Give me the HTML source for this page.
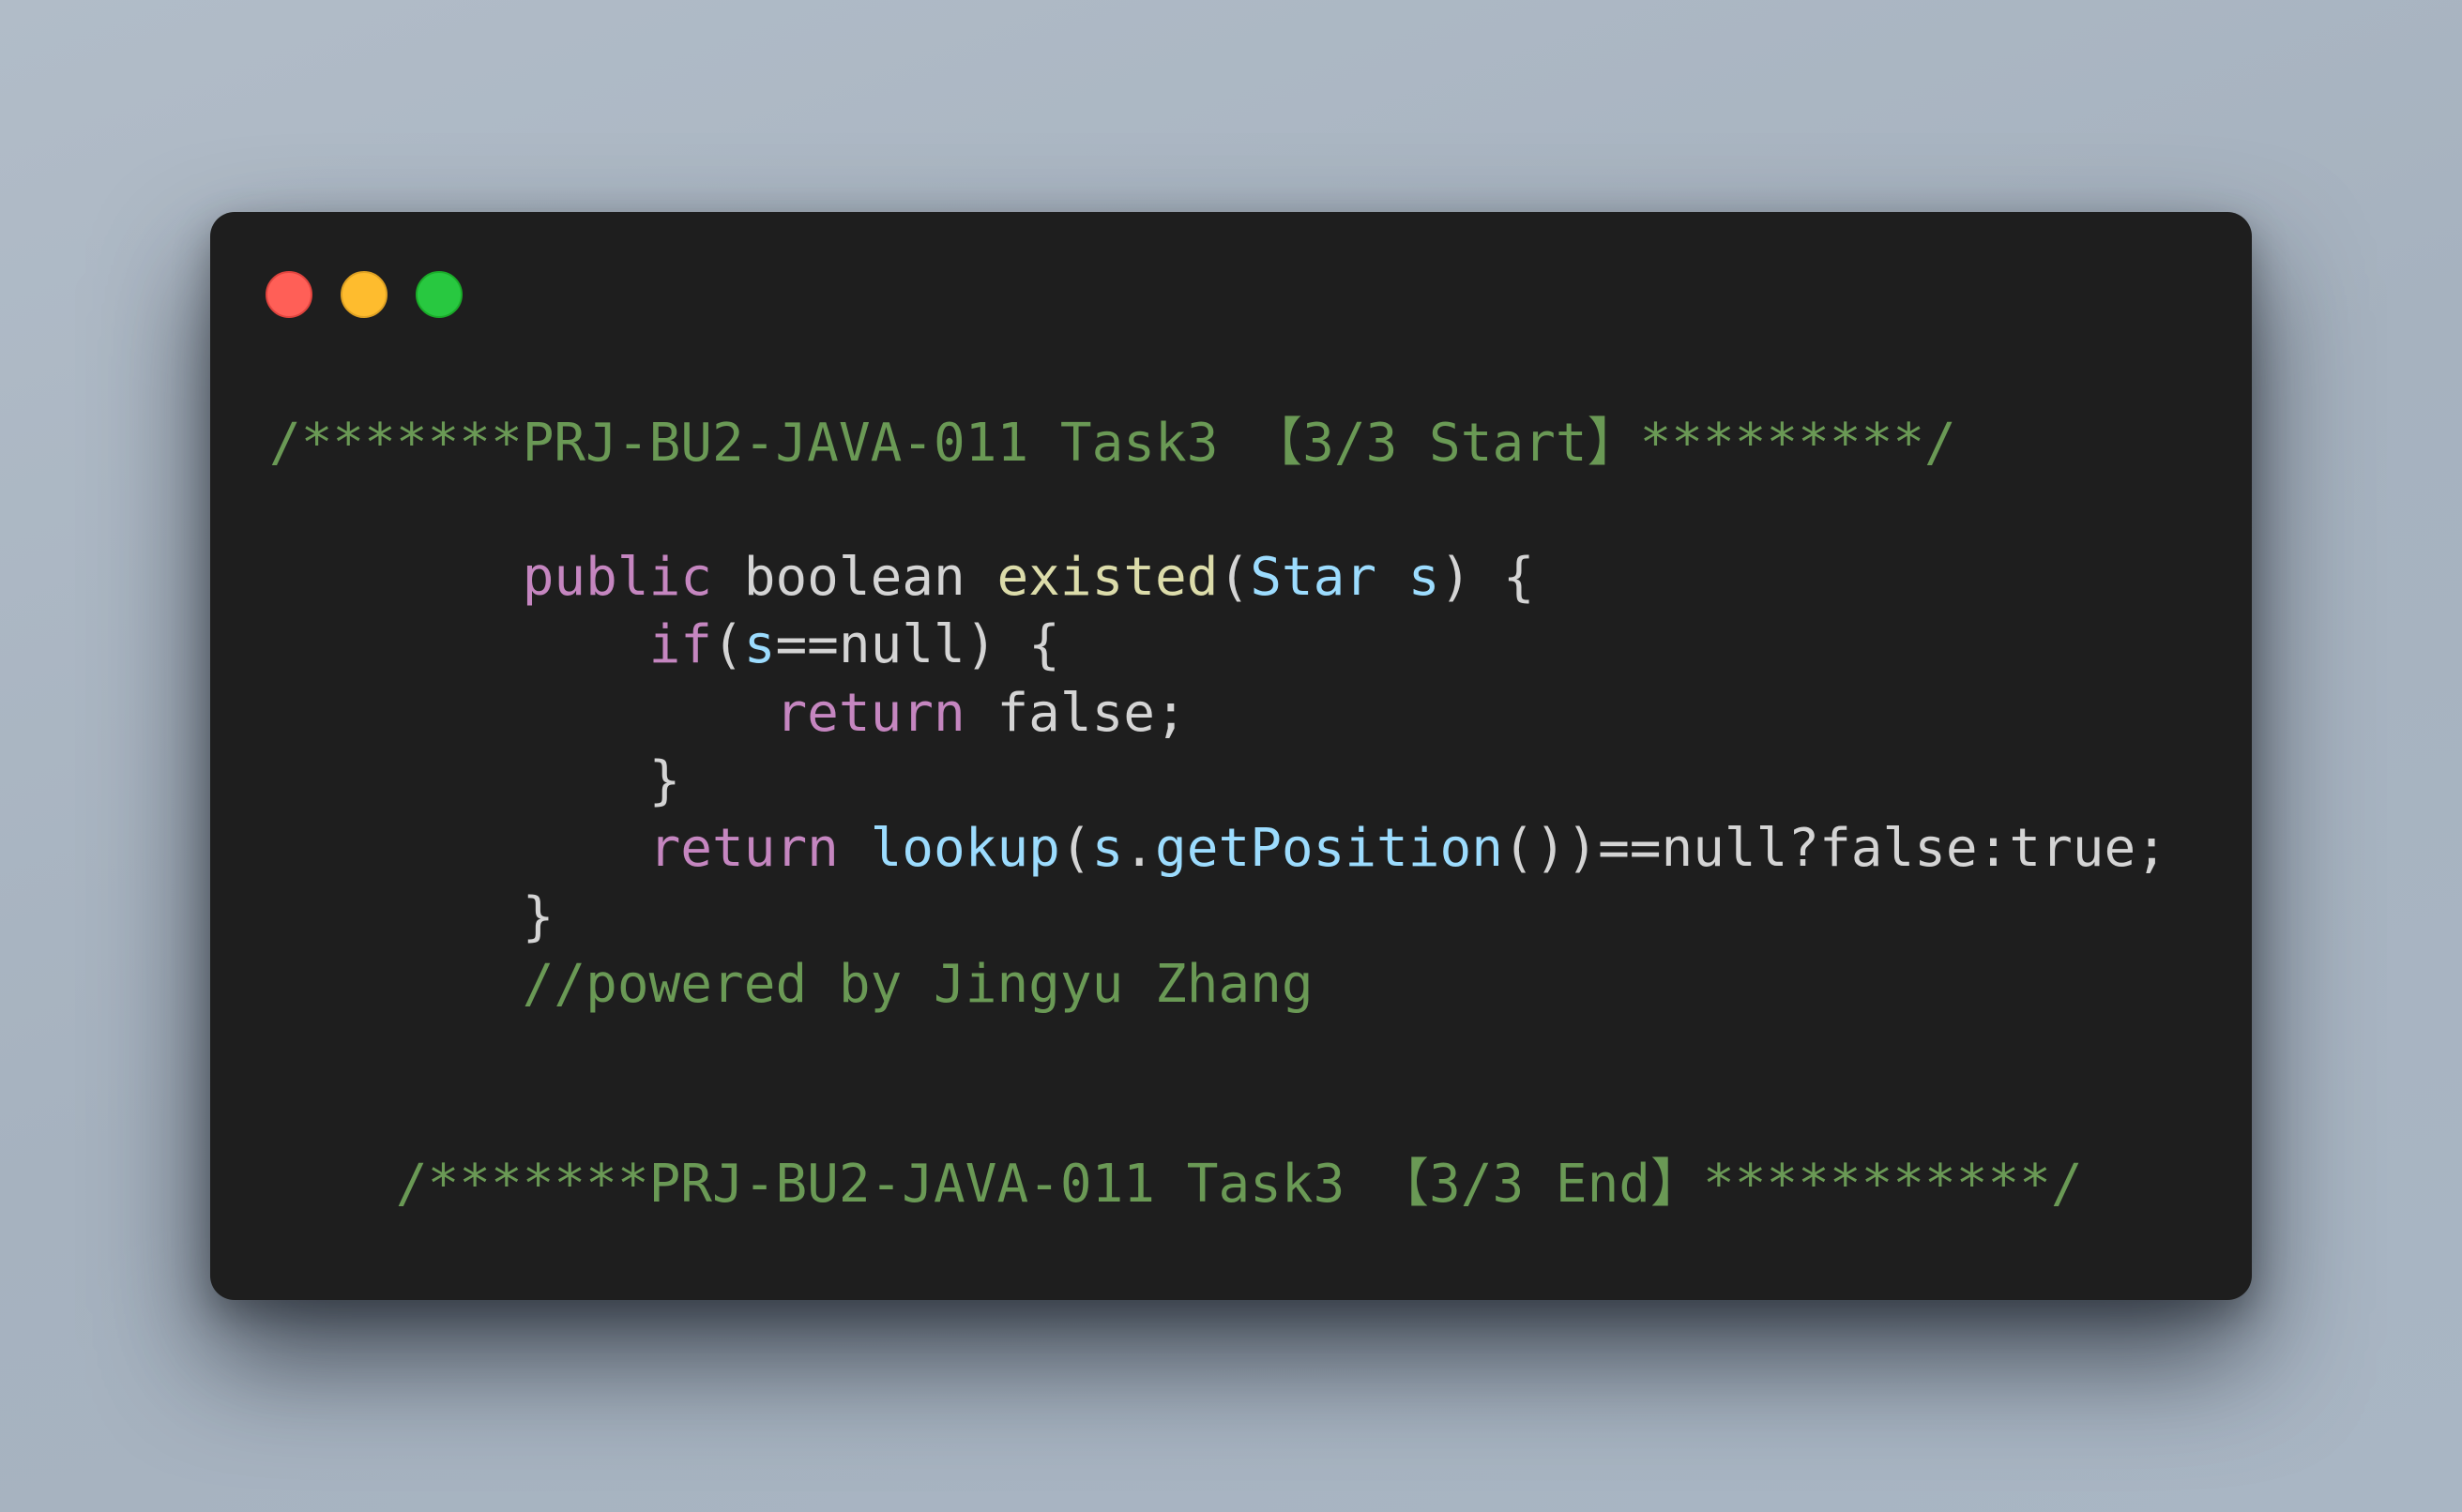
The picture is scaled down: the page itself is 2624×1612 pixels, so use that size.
<!DOCTYPE html>
<html><head><meta charset="utf-8">
<style>
html,body{margin:0;padding:0;}
body{width:2624px;height:1612px;overflow:hidden;position:relative;
background:linear-gradient(160deg,#b1bcc8 0%,#a6b2bf 50%,#a9b6c4 100%);}
.win{position:absolute;left:224px;top:226px;width:2176px;height:1160px;background:#1e1e1e;border-radius:26px;
box-shadow:0 60px 120px rgba(20,25,35,0.7),0 15px 40px rgba(0,0,0,0.3);}
.dot{position:absolute;top:289px;width:50px;height:50px;border-radius:50%;box-sizing:border-box;}
.r{left:283px;background:#ff5f57;border:2px solid #e0443e;}
.y{left:363px;background:#febc2e;border:2px solid #dea123;}
.g{left:443px;background:#28c840;border:2px solid #1aab29;}
.l{position:absolute;left:287px;font-family:"DejaVu Sans Mono","Liberation Mono","Noto Sans CJK SC",monospace;font-size:56px;line-height:72px;white-space:pre;color:#d4d4d4;}
.c{color:#6a9955}.k{color:#c586c0}.f{color:#dcdcaa}.v{color:#9cdcfe}
</style></head><body>
<div class="win"></div>
<div class="dot r"></div><div class="dot y"></div><div class="dot g"></div>
<div class="l c" style="top:437px">/*******PRJ-BU2-JAVA-011 Task3 【3/3 Start】*********/</div>
<div class="l" style="top:580px">        <span class="k">public</span> boolean <span class="f">existed</span>(<span class="v">Star s</span>) {</div>
<div class="l" style="top:652px">            <span class="k">if</span>(<span class="v">s</span>==null) {</div>
<div class="l" style="top:725px">                <span class="k">return</span> false;</div>
<div class="l" style="top:797px">            }</div>
<div class="l" style="top:869px">            <span class="k">return</span> <span class="v">lookup</span>(<span class="v">s</span>.<span class="v">getPosition</span>())==null?false:true;</div>
<div class="l" style="top:942px">        }</div>
<div class="l c" style="top:1014px">        //powered by Jingyu Zhang</div>
<div class="l c" style="top:1227px">    /*******PRJ-BU2-JAVA-011 Task3 【3/3 End】***********/</div>
</body></html>
